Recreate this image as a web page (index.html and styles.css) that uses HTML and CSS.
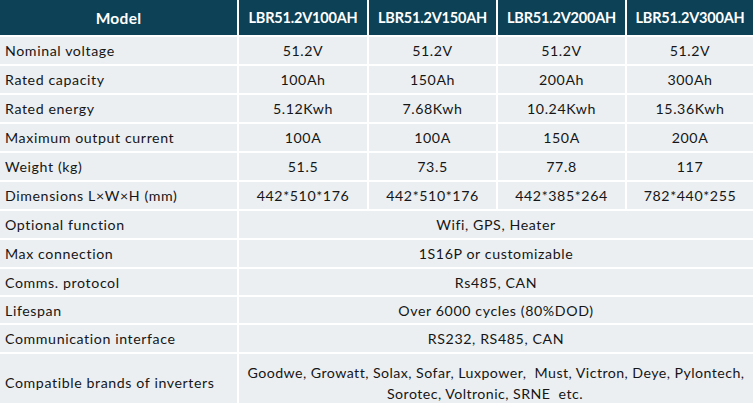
FILE: index.html
```html
<!DOCTYPE html>
<html lang="en">
<head>
<meta charset="utf-8">
<title>LBR51.2V specifications</title>
<link rel="stylesheet" href="styles.css">
</head>
<body>
<div class="spec">
  <div class="cell head">Model</div>
  <div class="cell head">LBR51.2V100AH</div>
  <div class="cell head">LBR51.2V150AH</div>
  <div class="cell head">LBR51.2V200AH</div>
  <div class="cell head">LBR51.2V300AH</div>

  <div class="cell label">Nominal voltage</div>
  <div class="cell val">51.2V</div>
  <div class="cell val">51.2V</div>
  <div class="cell val">51.2V</div>
  <div class="cell val">51.2V</div>

  <div class="cell label">Rated capacity</div>
  <div class="cell val">100Ah</div>
  <div class="cell val">150Ah</div>
  <div class="cell val">200Ah</div>
  <div class="cell val">300Ah</div>

  <div class="cell label">Rated energy</div>
  <div class="cell val">5.12Kwh</div>
  <div class="cell val">7.68Kwh</div>
  <div class="cell val">10.24Kwh</div>
  <div class="cell val">15.36Kwh</div>

  <div class="cell label">Maximum output current</div>
  <div class="cell val">100A</div>
  <div class="cell val">100A</div>
  <div class="cell val">150A</div>
  <div class="cell val">200A</div>

  <div class="cell label">Weight (kg)</div>
  <div class="cell val">51.5</div>
  <div class="cell val">73.5</div>
  <div class="cell val">77.8</div>
  <div class="cell val">117</div>

  <div class="cell label">Dimensions L×W×H (mm)</div>
  <div class="cell val">442*510*176</div>
  <div class="cell val">442*510*176</div>
  <div class="cell val">442*385*264</div>
  <div class="cell val">782*440*255</div>

  <div class="cell label">Optional function</div>
  <div class="cell val wide">Wifi, GPS, Heater</div>

  <div class="cell label">Max connection</div>
  <div class="cell val wide">1S16P or customizable</div>

  <div class="cell label">Comms. protocol</div>
  <div class="cell val wide">Rs485, CAN</div>

  <div class="cell label">Lifespan</div>
  <div class="cell val wide">Over 6000 cycles (80%DOD)</div>

  <div class="cell label">Communication interface</div>
  <div class="cell val wide">RS232, RS485, CAN</div>

  <div class="cell label">Compatible brands of inverters</div>
  <div class="cell val wide multi"><span>Goodwe, Growatt, Solax, Sofar, Luxpower,&nbsp; Must, Victron, Deye, Pylontech,</span><span class="line2">Sorotec, Voltronic, SRNE&nbsp; etc.</span></div>
</div>
</body>
</html>
```

FILE: styles.css
```css
html, body {
  margin: 0;
  padding: 0;
  background: #ffffff;
  overflow: hidden;
}

body {
  font-family: Lato, "Open Sans", "Liberation Sans", sans-serif;
  color: #161616;
}

.spec {
  display: grid;
  grid-template-columns: 237px 128px 127px 127px 126px;
  grid-template-rows: 35px repeat(8, 27px) 26px 26px 27px 56px;
  gap: 2px;
  width: 753px;
}

.cell {
  background: #ebeff2;
  display: flex;
  align-items: center;
  font-size: 14.2px;
  letter-spacing: 0.6px;
  white-space: nowrap;
}

.head {
  background: #0c4156;
  color: #ffffff;
  font-weight: 700;
  font-size: 14.5px;
  letter-spacing: -0.2px;
  justify-content: center;
}

.head:first-child {
  font-size: 15.5px;
  letter-spacing: 0.3px;
}

.label {
  padding-left: 5px;
}

.val {
  justify-content: center;
}

.wide {
  grid-column: 2 / span 4;
}

.multi {
  flex-direction: column;
  line-height: 21px;
  padding-top: 1px;
  letter-spacing: 0.45px;
}

.line2 {
  padding-right: 22px;
}
```
